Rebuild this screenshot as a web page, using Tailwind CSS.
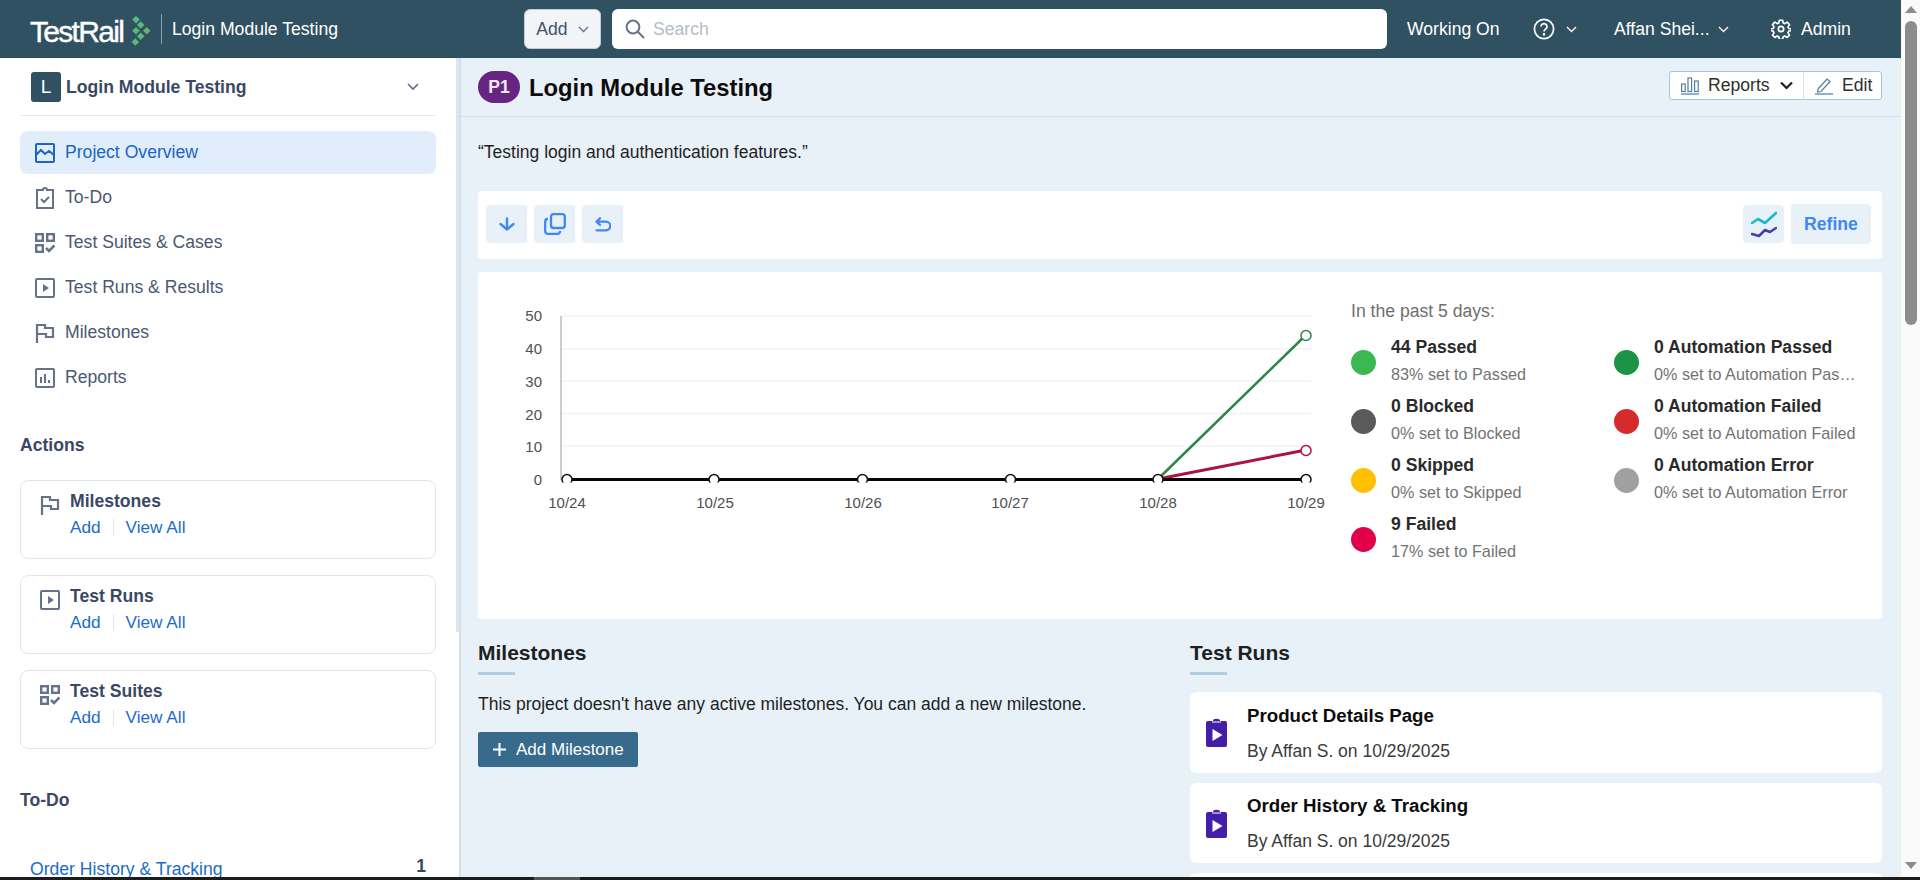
<!DOCTYPE html>
<html lang="en">
<head>
    <meta charset="UTF-8">
    <title>Login Module Testing - TestRail</title>
    <script src="https://cdn.jsdelivr.net/npm/@tailwindcss/browser@4"></script>
</head>
<body class="font-['Liberation_Sans',Arial,sans-serif] overflow-hidden bg-white">
<div class="flex flex-col w-[1920px] h-[880px] overflow-hidden">
    <div class="flex flex-1 min-h-0">
        <div class="flex flex-col w-[1901px]">
            <!-- top bar -->
            <header class="flex items-center h-[58px] shrink-0 bg-[#2f5161] text-white">
                <span class="ml-[30px] w-[101px] pt-[5px] text-[30px] leading-none tracking-[-1.7px] [-webkit-text-stroke:0.4px_white]">TestRail</span>
                <svg class="w-[20px] h-[30px] mt-[4px]" viewBox="0 0 20 30" fill="#5cb877">
                    <path d="M5 0l3.800 3.500L5 7.500 1.200 3.500zM9.700 5.200l3.800 3.800-3.800 3.800L5.900 9zM5 10.900l3.800 3.800L5 18.500l-3.800-3.800zM15.700 10.900l3.800 3.800-3.800 3.800-3.800-3.800zM9.700 16.500l3.800 3.800-3.800 3.800-3.800-3.800zM4.300 22.200l3.800 3.800-3.800 3.800L.5 26z"/>
                </svg>
                <div class="ml-[10px] w-px h-[30px] bg-[#8aa1ab]"></div>
                <span class="ml-[10px] w-[352px] text-[17.6px]">Login Module Testing</span>
                <button class="flex items-center justify-center gap-[10px] w-[77px] h-[40px] rounded-[6px] bg-[#f2f4f7] border border-[#c3cbd3] text-[#44516b] text-[17.6px]">
                    Add
                    <svg class="w-[11px] h-[7px]" viewBox="0 0 11 7" fill="none" stroke="#66728a" stroke-width="1.4"><path d="M1 1l4.500 4.500L10 1"/></svg>
                </button>
                <div class="flex items-center ml-[11px] w-[775px] h-[40px] rounded-[6px] bg-white pl-[13px]">
                    <svg class="w-[20px] h-[20px]" viewBox="0 0 20 20" fill="none" stroke="#66728a" stroke-width="2"><circle cx="8" cy="8" r="6.400"/><path d="M12.800 12.800L19 19"/></svg>
                    <span class="ml-[8px] text-[17.6px] text-[#b6bcc8]">Search</span>
                </div>
                <span class="ml-[20px] w-[126px] text-[17.6px]">Working On</span>
                <svg class="w-[22px] h-[22px]" viewBox="0 0 22 22" fill="none" stroke="white" stroke-width="1.700"><circle cx="11" cy="11" r="9.600"/><path d="M8 8.600a3 3 0 1 1 4.600 2.500c-1 .7-1.600 1.200-1.600 2.500"/><circle cx="11" cy="16.300" r=".5" fill="white"/></svg>
                <svg class="ml-[11px] w-[11px] h-[7px]" viewBox="0 0 11 7" fill="none" stroke="white" stroke-width="1.300"><path d="M1 1l4.500 4.500L10 1"/></svg>
                <span class="ml-[37px] w-[104px] text-[17.6px]">Affan Shei...</span>
                <svg class="w-[11px] h-[7px]" viewBox="0 0 11 7" fill="none" stroke="white" stroke-width="1.300"><path d="M1 1l4.500 4.500L10 1"/></svg>
                <svg class="ml-[42px] w-[20px] h-[20px]" viewBox="0 0 24 24" fill="none" stroke="white" stroke-width="2" stroke-linejoin="round"><circle cx="12" cy="12" r="3.200"/><path d="M10 1.500h4l.6 3.200 2 .9 2.800-1.800 2.800 2.800-1.800 2.800.9 2 3.200.6v2l-3.200.6-.9 2 1.800 2.800-2.800 2.800-2.800-1.800-2 .9-.6 3.200h-4l-.6-3.200-2-.9-2.800 1.800-2.800-2.800 1.800-2.800-.9-2-3.200-.6v-2l3.200-.6.9-2-1.800-2.800 2.800-2.800 2.800 1.800 2-.9z"/></svg>
                <span class="ml-[10px] text-[17.6px]">Admin</span>
            </header>

            <div class="flex flex-1 min-h-0">
                <!-- sidebar -->
                <aside class="flex w-[459px] shrink-0 bg-white overflow-hidden">
                    <div class="w-[456px] px-[20px] pt-[1px]">
                        <div class="flex items-center h-[57px] border-b border-[#e5e7eb]">
                            <div class="flex items-center justify-center ml-[11px] w-[30px] h-[30px] rounded-[3px] bg-[#2f5161] text-white text-[19px]">L</div>
                            <span class="ml-[5px] flex-1 text-[17.6px] font-bold text-[#3b4863]">Login Module Testing</span>
                            <svg class="mr-[17px] w-[12px] h-[8px]" viewBox="0 0 12 8" fill="none" stroke="#5f6d86" stroke-width="1.600"><path d="M1 1l5 5 5-5"/></svg>
                        </div>
                        <nav class="mt-[15px] flex flex-col gap-[2px] text-[17.6px] text-[#4b5871]">
                            <a class="flex items-center h-[43px] pl-[15px] rounded-[8px] bg-[#e1edfb] text-[#1a66c2]">
                                <svg class="w-[20px] h-[20px] mr-[10px]" viewBox="0 0 20 20" fill="none" stroke="#1a66c2" stroke-width="2"><rect x="1" y="1" width="18" height="18" rx="1"/><path d="M1 12l5-5 4 4 4-3 5 4" stroke-width="2"/></svg>
                                Project Overview
                            </a>
                            <a class="flex items-center h-[43px] pl-[15px]">
                                <svg class="w-[20px] h-[22px] mr-[10px]" viewBox="0 0 20 22" fill="none" stroke="#66728a" stroke-width="2"><path d="M7 3H2v18h16V3h-5M7 3h1a2 2 0 0 1 4 0h1"/><path d="M6 12l3 3 5-5" stroke-width="2"/></svg>
                                To-Do
                            </a>
                            <a class="flex items-center h-[43px] pl-[15px]">
                                <svg class="w-[20px] h-[20px] mr-[10px]" viewBox="0 0 20 20" fill="none" stroke="#66728a" stroke-width="2.400"><rect x="1.200" y="1.200" width="6.600" height="6.600"/><rect x="12.200" y="1.200" width="6.600" height="6.600"/><rect x="1.200" y="12.200" width="6.600" height="6.600"/><path d="M11 15l3 3 5.500-5.500" stroke-width="2.600"/></svg>
                                Test Suites &amp; Cases
                            </a>
                            <a class="flex items-center h-[43px] pl-[15px]">
                                <svg class="w-[20px] h-[20px] mr-[10px]" viewBox="0 0 20 20" fill="none" stroke="#66728a" stroke-width="2"><rect x="1" y="1" width="18" height="18" rx="1"/><path d="M8 6l6 4-6 4z" fill="#66728a" stroke="none"/></svg>
                                Test Runs &amp; Results
                            </a>
                            <a class="flex items-center h-[43px] pl-[15px]">
                                <svg class="w-[20px] h-[20px] mr-[10px]" viewBox="0 0 20 20" fill="none" stroke="#66728a" stroke-width="2.200"><path d="M2 20V2h8v3h8v9h-7v-3H2"/></svg>
                                Milestones
                            </a>
                            <a class="flex items-center h-[43px] pl-[15px]">
                                <svg class="w-[20px] h-[20px] mr-[10px]" viewBox="0 0 20 20" fill="none" stroke="#66728a" stroke-width="2"><rect x="1" y="1" width="18" height="18" rx="1"/><path d="M6 9v6M10 6v9M14 12v3"/></svg>
                                Reports
                            </a>
                        </nav>

                        <h3 class="mt-[36px] h-[20px] leading-[20px] text-[17.6px] font-bold text-[#3b4863]">Actions</h3>

                        <div class="mt-[25px] flex flex-col gap-[16px]">
                            <div class="flex h-[79px] rounded-[8px] border border-[#e2e6ea] pl-[19px] pt-[10px]">
                                <svg class="mt-[4px] w-[20px] h-[20px]" viewBox="0 0 20 20" fill="none" stroke="#66728a" stroke-width="2.200"><path d="M2 20V2h8v3h8v9h-7v-3H2"/></svg>
                                <div class="ml-[10px]">
                                    <div class="h-[20px] leading-[20px] text-[17.6px] font-bold text-[#3b4863]">Milestones</div>
                                    <div class="mt-[6px] flex items-center text-[17.2px] leading-[20px] text-[#1a6cc9]">
                                        <a>Add</a><span class="mx-[12px] w-px h-[17px] bg-[#e2e6ea]"></span><a>View All</a>
                                    </div>
                                </div>
                            </div>
                            <div class="flex h-[79px] rounded-[8px] border border-[#e2e6ea] pl-[19px] pt-[10px]">
                                <svg class="mt-[4px] w-[20px] h-[20px]" viewBox="0 0 20 20" fill="none" stroke="#66728a" stroke-width="2"><rect x="1" y="1" width="18" height="18" rx="1"/><path d="M8 6l6 4-6 4z" fill="#66728a" stroke="none"/></svg>
                                <div class="ml-[10px]">
                                    <div class="h-[20px] leading-[20px] text-[17.6px] font-bold text-[#3b4863]">Test Runs</div>
                                    <div class="mt-[6px] flex items-center text-[17.2px] leading-[20px] text-[#1a6cc9]">
                                        <a>Add</a><span class="mx-[12px] w-px h-[17px] bg-[#e2e6ea]"></span><a>View All</a>
                                    </div>
                                </div>
                            </div>
                            <div class="flex h-[79px] rounded-[8px] border border-[#e2e6ea] pl-[19px] pt-[10px]">
                                <svg class="mt-[4px] w-[20px] h-[20px]" viewBox="0 0 20 20" fill="none" stroke="#66728a" stroke-width="2.400"><rect x="1.200" y="1.200" width="6.600" height="6.600"/><rect x="12.200" y="1.200" width="6.600" height="6.600"/><rect x="1.200" y="12.200" width="6.600" height="6.600"/><path d="M11 15l3 3 5.500-5.500" stroke-width="2.600"/></svg>
                                <div class="ml-[10px]">
                                    <div class="h-[20px] leading-[20px] text-[17.6px] font-bold text-[#3b4863]">Test Suites</div>
                                    <div class="mt-[6px] flex items-center text-[17.2px] leading-[20px] text-[#1a6cc9]">
                                        <a>Add</a><span class="mx-[12px] w-px h-[17px] bg-[#e2e6ea]"></span><a>View All</a>
                                    </div>
                                </div>
                            </div>
                        </div>

                        <h3 class="mt-[41px] h-[20px] leading-[20px] text-[17.6px] font-bold text-[#3b4863]">To-Do</h3>
                        <div class="mt-[49px] flex justify-between h-[20px] leading-[20px] pl-[10px] pr-[10px] text-[17.6px]">
                            <a class="text-[#1a6cc9]">Order History &amp; Tracking</a>
                            <span class="font-bold text-[#3b4863] -mt-[3px]">1</span>
                        </div>
                    </div>
                    <div class="w-[3px]"><div class="h-[574px] bg-[#dde4eb]"></div></div>
                </aside>

                <!-- main -->
                <main class="flex-1 min-w-0 bg-[#e9f1f8] border-l-2 border-[#d3e0ec] overflow-hidden">
                    <div class="flex items-center h-[59px] border-b border-[#cfdfeb] pl-[17px] pr-[19px]">
                        <span class="flex items-center justify-center w-[42px] h-[32px] rounded-full bg-[#662582] text-[#eee8f3] text-[17.6px] font-bold">P1</span>
                        <h1 class="ml-[9px] pt-[1px] flex-1 text-[23.8px] font-bold text-[#0c0c0c]">Login Module Testing</h1>
                        <div class="flex h-[29px] -mt-[3px] rounded-[3px] border border-[#a9c3d9] bg-white text-[17.6px] text-[#2e2e2e]">
                            <button class="flex items-center w-[134px] pl-[11px] border-r border-[#d5e1ec]">
                                <svg class="w-[18px] h-[18px]" viewBox="0 0 18 18" fill="none" stroke="#4f7fa3" stroke-width="1.200"><rect x=".6" y="7" width="3.600" height="7.500"/><rect x="7" y="1" width="3.600" height="13.500"/><rect x="13.600" y="4" width="3.600" height="10.500"/><path d="M0 17h18" stroke="#8fb3cf" stroke-width="2"/></svg>
                                <span class="ml-[9px]">Reports</span>
                                <svg class="ml-[10px] w-[13px] h-[9px]" viewBox="0 0 13 9" fill="none" stroke="#1d1d1d" stroke-width="2.200"><path d="M1 1.500l5.500 5.500L12 1.500"/></svg>
                            </button>
                            <button class="flex items-center pl-[11px] w-[77px]">
                                <svg class="w-[18px] h-[18px]" viewBox="0 0 18 18" fill="none" stroke="#4f7fa3" stroke-width="1.200"><path d="M3 12L12 2l3 2.500-9 10-3.400.6z"/><path d="M0 17h18" stroke="#8fb3cf" stroke-width="2"/></svg>
                                <span class="ml-[9px]">Edit</span>
                            </button>
                        </div>
                    </div>

                    <div class="pl-[17px] pr-[19px]">
                        <p class="mt-[25px] h-[20px] leading-[20px] text-[17.5px] text-[#1f1f1f]">“Testing login and authentication features.”</p>

                        <!-- toolbar -->
                        <div class="mt-[29px] flex items-center h-[68px] pb-[2px] rounded-[3px] bg-white pl-[8px] pr-[11px]">
                            <button class="flex items-center justify-center w-[41px] h-[38px] rounded-[3px] bg-[#e9f1f8]">
                                <svg class="w-[16px] h-[14px]" viewBox="0 0 16 14" fill="none" stroke="#4087f5" stroke-width="2.400" stroke-linecap="round" stroke-linejoin="round"><path d="M8 1.500v11M1.500 7L8 12.500 14.500 7"/></svg>
                            </button>
                            <button class="ml-[7px] flex items-center justify-center w-[41px] h-[38px] rounded-[3px] bg-[#e9f1f8]">
                                <svg class="w-[22px] h-[22px]" viewBox="0 0 22 22" fill="none" stroke="#4087f5" stroke-width="2.300"><rect x="7" y="1.200" width="13.800" height="13.800" rx="2.500"/><path d="M4 6H3.500A2.500 2.500 0 0 0 1.200 8.500v10A2.500 2.500 0 0 0 3.500 20.800h10a2.500 2.500 0 0 0 2.500-2.300V18"/></svg>
                            </button>
                            <button class="ml-[7px] flex items-center justify-center w-[41px] h-[38px] rounded-[3px] bg-[#e9f1f8]">
                                <svg class="w-[16px] h-[15px]" viewBox="0 0 16 15" fill="none" stroke="#4087f5" stroke-width="2.300" stroke-linecap="round" stroke-linejoin="round"><path d="M5 1.200L1.500 4.700 5 8M2 4.700h9a3.800 3.800 0 0 1 0 8.600H1.500"/></svg>
                            </button>
                            <button class="ml-auto flex items-center justify-center w-[41px] h-[38px] rounded-[4px] bg-[#e9f1f8]">
                                <svg class="w-[26px] h-[27px]" viewBox="0 0 26 27" fill="none" stroke-width="2.600" stroke-linecap="round" stroke-linejoin="round"><path d="M1 12l6-4 7 4L25 2" stroke="#1ab8d0"/><path d="M1 23l7 2 6-6 5 2 6-4" stroke="#4043b2"/></svg>
                            </button>
                            <button class="ml-[7px] w-[80px] h-[40px] rounded-[4px] bg-[#e9f1f8] text-[#4087f5] text-[17.6px] font-bold">Refine</button>
                        </div>

                        <!-- chart card -->
                        <div class="mt-[13px] flex h-[347px] rounded-[3px] bg-white">
                            <svg class="w-[873px] h-[347px] shrink-0" viewBox="0 0 873 347" font-family="Liberation Sans, Arial, sans-serif" font-size="15" fill="#4f4f4f">
                                <defs><clipPath id="plot"><rect x="0" y="0" width="873" height="210.500"/></clipPath></defs>
                                <g stroke="#eef3f9" stroke-width="1.500">
                                    <path d="M83 44H833M83 77H833M83 109H833M83 141.500H833M83 174H833"/>
                                </g>
                                <path d="M83 44V208" stroke="#bdbdbd" stroke-width="1.500"/>
                                <g text-anchor="end">
                                    <text x="64" y="49">50</text><text x="64" y="82">40</text><text x="64" y="115">30</text><text x="64" y="148">20</text><text x="64" y="180">10</text><text x="64" y="213">0</text>
                                </g>
                                <path d="M680 207L828 63" stroke="#2a8748" stroke-width="2.500" fill="none"/>
                                <path d="M680 207L828 178" stroke="#ad1145" stroke-width="3" fill="none"/>
                                <path d="M89 207.500H828" stroke="#0b0404" stroke-width="3"/>
                                <g fill="white" stroke="#111" stroke-width="1.500" clip-path="url(#plot)">
                                    <circle cx="89" cy="207.500" r="5"/><circle cx="236" cy="207.500" r="5"/><circle cx="384.500" cy="207.500" r="5"/><circle cx="532.500" cy="207.500" r="5"/><circle cx="680" cy="207.500" r="5"/><circle cx="828" cy="207.500" r="5"/>
                                </g>
                                <circle cx="828" cy="63.500" r="5" fill="white" stroke="#2a8748" stroke-width="1.500"/>
                                <circle cx="828" cy="178.500" r="5" fill="white" stroke="#ad1145" stroke-width="1.500"/>
                                <g text-anchor="middle">
                                    <text x="89" y="236">10/24</text><text x="237" y="236">10/25</text><text x="385" y="236">10/26</text><text x="532" y="236">10/27</text><text x="680" y="236">10/28</text><text x="828" y="236">10/29</text>
                                </g>
                            </svg>
                            <div class="w-[531px]">
                                <div class="mt-[29px] h-[20px] leading-[20px] text-[17.6px] text-[#6f6f6f]">In the past 5 days:</div>
                                <div class="mt-[10px] grid grid-cols-[263px_1fr] auto-rows-[59px]">
                                    <div class="flex items-center"><span class="mt-[3px] w-[25px] h-[25px] rounded-full bg-[#3bb851]"></span><div class="ml-[15px]"><div class="h-[26px] leading-[26px] text-[17.6px] font-bold text-[#2a2a2a]">44 Passed</div><div class="h-[27px] leading-[29px] text-[16.2px] text-[#737373]">83% set to Passed</div></div></div>
                                    <div class="flex items-center"><span class="mt-[3px] w-[25px] h-[25px] rounded-full bg-[#1c9447]"></span><div class="ml-[15px]"><div class="h-[26px] leading-[26px] text-[17.6px] font-bold text-[#2a2a2a]">0 Automation Passed</div><div class="h-[27px] w-[205px] truncate leading-[29px] text-[16.2px] text-[#737373]">0% set to Automation Passed</div></div></div>
                                    <div class="flex items-center"><span class="mt-[3px] w-[25px] h-[25px] rounded-full bg-[#5a5a5a]"></span><div class="ml-[15px]"><div class="h-[26px] leading-[26px] text-[17.6px] font-bold text-[#2a2a2a]">0 Blocked</div><div class="h-[27px] leading-[29px] text-[16.2px] text-[#737373]">0% set to Blocked</div></div></div>
                                    <div class="flex items-center"><span class="mt-[3px] w-[25px] h-[25px] rounded-full bg-[#d52b2b]"></span><div class="ml-[15px]"><div class="h-[26px] leading-[26px] text-[17.6px] font-bold text-[#2a2a2a]">0 Automation Failed</div><div class="h-[27px] leading-[29px] text-[16.2px] text-[#737373]">0% set to Automation Failed</div></div></div>
                                    <div class="flex items-center"><span class="mt-[3px] w-[25px] h-[25px] rounded-full bg-[#ffc000]"></span><div class="ml-[15px]"><div class="h-[26px] leading-[26px] text-[17.6px] font-bold text-[#2a2a2a]">0 Skipped</div><div class="h-[27px] leading-[29px] text-[16.2px] text-[#737373]">0% set to Skipped</div></div></div>
                                    <div class="flex items-center"><span class="mt-[3px] w-[25px] h-[25px] rounded-full bg-[#a0a0a0]"></span><div class="ml-[15px]"><div class="h-[26px] leading-[26px] text-[17.6px] font-bold text-[#2a2a2a]">0 Automation Error</div><div class="h-[27px] leading-[29px] text-[16.2px] text-[#737373]">0% set to Automation Error</div></div></div>
                                    <div class="flex items-center"><span class="mt-[3px] w-[25px] h-[25px] rounded-full bg-[#e3004a]"></span><div class="ml-[15px]"><div class="h-[26px] leading-[26px] text-[17.6px] font-bold text-[#2a2a2a]">9 Failed</div><div class="h-[27px] leading-[29px] text-[16.2px] text-[#737373]">17% set to Failed</div></div></div>
                                </div>
                            </div>
                        </div>

                        <!-- bottom columns -->
                        <div class="mt-[22px] grid grid-cols-[712px_1fr]">
                            <section>
                                <h2 class="h-[22px] leading-[23px] text-[21px] font-bold text-[#1f1f1f]">Milestones</h2>
                                <div class="mt-[9px] w-[37px] h-[3px] bg-[#b0cfe4]"></div>
                                <p class="mt-[19px] h-[20px] leading-[20px] text-[17.5px] text-[#1f1f1f]">This project doesn't have any active milestones. You can add a new milestone.</p>
                                <button class="mt-[18px] flex items-center w-[160px] h-[35px] rounded-[2px] bg-[#386a8c] text-white text-[17px] pl-[15px]">
                                    <svg class="w-[13px] h-[13px]" viewBox="0 0 13 13" stroke="white" stroke-width="2"><path d="M6.500 0v13M0 6.500h13"/></svg>
                                    <span class="ml-[10px]">Add Milestone</span>
                                </button>
                            </section>
                            <section>
                                <h2 class="h-[22px] leading-[23px] text-[21px] font-bold text-[#1f1f1f]">Test Runs</h2>
                                <div class="mt-[9px] w-[37px] h-[3px] bg-[#b0cfe4]"></div>
                                <div class="mt-[17px] flex flex-col gap-[10px]">
                                    <div class="flex items-center h-[81px] rounded-[6px] bg-white pl-[16px]">
                                        <svg class="w-[21px] h-[29px]" viewBox="0 0 21 29"><path d="M2 3h5a3 2 0 0 1 7 0h5a2 2 0 0 1 2 2v22a2 2 0 0 1-2 2H2a2 2 0 0 1-2-2V5a2 2 0 0 1 2-2z" fill="#451ea8"/><path d="M6 4h9" stroke="white" stroke-width="1"/><path d="M6.500 11l10 6-10 6z" fill="white"/></svg>
                                        <div class="ml-[20px]">
                                            <div class="h-[22px] leading-[22px] text-[18.7px] font-bold text-[#0c0c0c]">Product Details Page</div>
                                            <div class="mt-[14px] h-[20px] leading-[20px] text-[17.5px] text-[#3a3a3a]">By Affan S. on 10/29/2025</div>
                                        </div>
                                    </div>
                                    <div class="flex items-center h-[80px] rounded-[6px] bg-white pl-[16px]">
                                        <svg class="w-[21px] h-[29px]" viewBox="0 0 21 29"><path d="M2 3h5a3 2 0 0 1 7 0h5a2 2 0 0 1 2 2v22a2 2 0 0 1-2 2H2a2 2 0 0 1-2-2V5a2 2 0 0 1 2-2z" fill="#451ea8"/><path d="M6 4h9" stroke="white" stroke-width="1"/><path d="M6.500 11l10 6-10 6z" fill="white"/></svg>
                                        <div class="ml-[20px]">
                                            <div class="h-[22px] leading-[22px] text-[18.7px] font-bold text-[#0c0c0c]">Order History &amp; Tracking</div>
                                            <div class="mt-[14px] h-[20px] leading-[20px] text-[17.5px] text-[#3a3a3a]">By Affan S. on 10/29/2025</div>
                                        </div>
                                    </div>
                                    <div class="h-[80px] rounded-[6px] bg-white"></div>
                                </div>
                            </section>
                        </div>
                    </div>
                </main>
            </div>
        </div>

        <!-- window scrollbar -->
        <div class="flex flex-col items-center w-[19px] shrink-0 bg-[#fafafa]">
            <div class="mt-[6px] w-0 h-0 border-x-[6px] border-x-transparent border-b-[7px] border-b-[#8c8c8c]"></div>
            <div class="mt-[8px] w-[12px] h-[304px] rounded-[6px] bg-[#8c8c8c]"></div>
            <div class="mt-auto mb-[8px] w-0 h-0 border-x-[6px] border-x-transparent border-t-[7px] border-t-[#8c8c8c]"></div>
        </div>
    </div>
    <!-- bottom scrollbar -->
    <div class="h-[3px] shrink-0 bg-[#1c1c1c] pl-[534px]"><div class="w-[46px] h-[3px] bg-[#555555]"></div></div>
</div>
</body>
</html>
